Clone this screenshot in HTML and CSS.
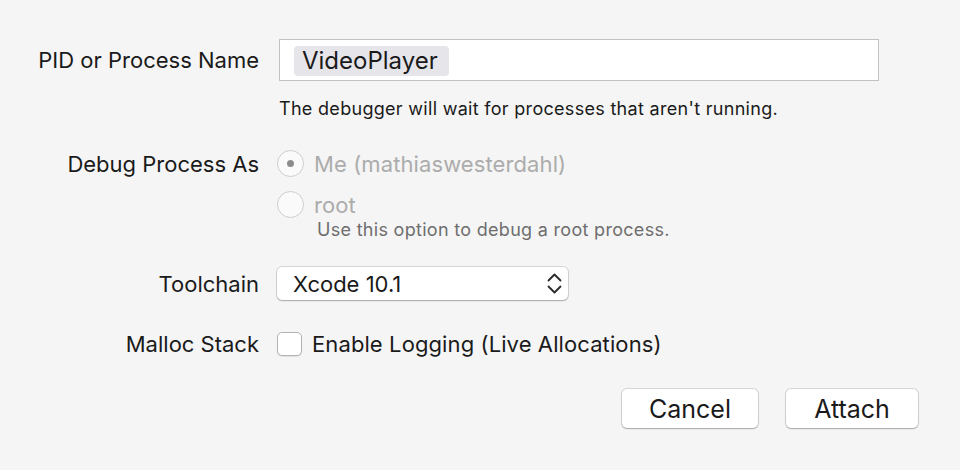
FILE: index.html
```html
<!DOCTYPE html>
<html>
<head>
<meta charset="utf-8">
<link rel="stylesheet" href="styles.css">
</head>
<body>
<div class="form">
  <div class="row row-pid">
    <div class="label">PID or Process Name</div>
    <div class="field"><span class="token">VideoPlayer</span></div>
  </div>
  <div class="hint">The debugger will wait for processes that aren't running.</div>

  <div class="row row-radio1">
    <div class="label">Debug Process As</div>
    <div class="radio checked"><span class="dot"></span></div>
    <div class="radio-text">Me (mathiaswesterdahl)</div>
  </div>
  <div class="row row-radio2">
    <div class="label"></div>
    <div class="radio"></div>
    <div class="radio-text">root</div>
  </div>
  <div class="subhint">Use this option to debug a root process.</div>

  <div class="row row-popup">
    <div class="label">Toolchain</div>
    <div class="popup">
      <span class="popup-text">Xcode 10.1</span>
      <svg class="chev" width="15" height="21" viewBox="0 0 15 21">
        <path d="M1.5 7.5 L7.5 1.5 L13.5 7.5" fill="none" stroke="#2a2a2a" stroke-width="1.8" stroke-linecap="round" stroke-linejoin="round"/>
        <path d="M1.5 13.5 L7.5 19.5 L13.5 13.5" fill="none" stroke="#2a2a2a" stroke-width="1.8" stroke-linecap="round" stroke-linejoin="round"/>
      </svg>
    </div>
  </div>

  <div class="row row-check">
    <div class="label">Malloc Stack</div>
    <div class="checkbox"></div>
    <div class="check-text">Enable Logging (Live Allocations)</div>
  </div>

  <div class="buttons">
    <div class="btn btn-cancel">Cancel</div>
    <div class="btn btn-attach">Attach</div>
  </div>
</div>
</body>
</html>
```

FILE: styles.css
```css
html, body {
  margin: 0;
  padding: 0;
  background: #f5f5f5;
  width: 960px;
  height: 470px;
  overflow: hidden;
  font-family: Inter, "Noto Sans", sans-serif;
  color: #1a1a1a;
}

.form {
  padding-top: 39px;
}

.row {
  display: flex;
  align-items: center;
}

.label {
  width: 259px;
  flex: none;
  text-align: right;
  font-size: 22px;
  margin-right: 19px;
  color: #1a1a1a;
}

.row-pid {
  height: 42px;
}

.field {
  width: 600px;
  height: 42px;
  box-sizing: border-box;
  margin-left: 1px;
  border: 1px solid #c2c2c2;
  background: #ffffff;
  display: flex;
  align-items: center;
  padding-left: 14px;
  padding-top: 2px;
}

.token {
  background: #e6e6ea;
  border-radius: 4px;
  font-size: 24px;
  line-height: 30px;
  padding: 0 11px 0 8px;
  color: #1a1a1a;
}

.hint {
  margin-left: 279px;
  margin-top: 18px;
  font-size: 18px;
  letter-spacing: 0.3px;
  line-height: 20px;
  color: #1a1a1a;
}

.row-radio1 {
  margin-top: 31px;
  height: 27px;
}

.row-radio2 {
  margin-top: 14px;
  height: 27px;
}

.radio {
  width: 27px;
  height: 27px;
  box-sizing: border-box;
  border-radius: 50%;
  border: 1px solid #cdcdcd;
  background: #fafafa;
  display: flex;
  align-items: center;
  justify-content: center;
  flex: none;
  margin-left: -1px;
}

.radio .dot {
  width: 7px;
  height: 7px;
  border-radius: 50%;
  background: #8c8c8c;
}

.radio-text {
  margin-left: 10px;
  font-size: 22px;
  letter-spacing: 0.1px;
  color: #acacac;
}

.subhint {
  margin-left: 317px;
  margin-top: 2px;
  font-size: 18px;
  letter-spacing: 0.3px;
  line-height: 20px;
  color: #6e6e6e;
}

.row-popup {
  margin-top: 27px;
  height: 33px;
}

.popup {
  width: 291px;
  height: 33px;
  box-sizing: border-box;
  margin-left: -1px;
  background: #ffffff;
  border-radius: 5px;
  box-shadow: 0 0 0 1px rgba(0,0,0,0.12), 0 1px 1.5px rgba(0,0,0,0.22);
  display: flex;
  align-items: center;
  justify-content: space-between;
  padding: 0 6px 0 16px;
}

.popup-text {
  font-size: 22px;
  color: #1a1a1a;
}

.chev {
  display: block;
}

.row-check {
  margin-top: 32px;
  height: 24px;
}

.checkbox {
  width: 25px;
  height: 24px;
  box-sizing: border-box;
  border-radius: 5px;
  border: 1px solid #b3b3b3;
  background: #ffffff;
  box-shadow: 0 1px 1px rgba(0,0,0,0.08);
  flex: none;
  margin-left: -1px;
}

.check-text {
  margin-left: 10px;
  font-size: 22px;
  letter-spacing: 0.1px;
  color: #1a1a1a;
}

.buttons {
  display: flex;
  justify-content: flex-end;
  gap: 28px;
  margin-top: 33px;
  padding-right: 42px;
}

.btn {
  height: 39px;
  box-sizing: border-box;
  background: #ffffff;
  border-radius: 5px;
  box-shadow: 0 0 0 1px rgba(0,0,0,0.12), 0 1px 1.5px rgba(0,0,0,0.22);
  font-size: 25px;
  display: flex;
  align-items: center;
  justify-content: center;
  color: #1a1a1a;
}

.btn-cancel {
  width: 136px;
}

.btn-attach {
  width: 132px;
}
```
